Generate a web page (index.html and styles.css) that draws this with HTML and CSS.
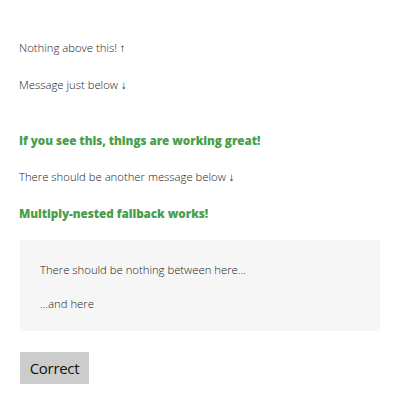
FILE: index.html
```html
<!DOCTYPE html>
<html>
<head>
<meta charset="utf-8">
<link rel="stylesheet" href="styles.css">
</head>
<body>
<main class="page">
  <p class="msg">Nothing above this! ↑</p>
  <p class="msg m-21">Message just below ↓</p>
  <p class="ok m-39">If you see this, things are working great!</p>
  <p class="msg m-21">There should be another message below ↓</p>
  <p class="ok m-20">Multiply-nested fallback works!</p>
  <section class="box">
    <p class="msg">There should be nothing between here...</p>
    <p class="msg m-18">...and here</p>
  </section>
  <button class="btn">Correct</button>
</main>
</body>
</html>
```
FILE: styles.css
```css
html, body {
  margin: 0;
  padding: 0;
  background: #fff;
}
.page {
  display: flex;
  flex-direction: column;
  align-items: flex-start;
  padding: 40px 20px 0 19px;
  font-family: "Open Sans", "Noto Sans", sans-serif;
}
.msg {
  margin: 0;
  font-size: 11.3px;
  line-height: 16px;
  font-weight: 300;
  color: #1a1a1a;
}
.ok {
  margin: 0;
  font-size: 11.7px;
  line-height: 16px;
  font-weight: 800;
  color: #4a9e4a;
  letter-spacing: -0.05px;
}
.m-21 { margin-top: 21px; }
.m-39 { margin-top: 39px; }
.m-20 { margin-top: 20px; }
.m-18 { margin-top: 18px; }
.box {
  align-self: stretch;
  margin: 19px 0 0 1px;
  background: #f6f6f6;
  padding: 22px 20px 19px 20px;
}
.btn {
  margin: 21px 0 0 1px;
  width: 69px;
  height: 32px;
  padding: 0;
  border: none;
  background: #cccccc;
  color: #111;
  font-family: "Open Sans", "Noto Sans", sans-serif;
  font-size: 15px;
  letter-spacing: -0.3px;
}
```
